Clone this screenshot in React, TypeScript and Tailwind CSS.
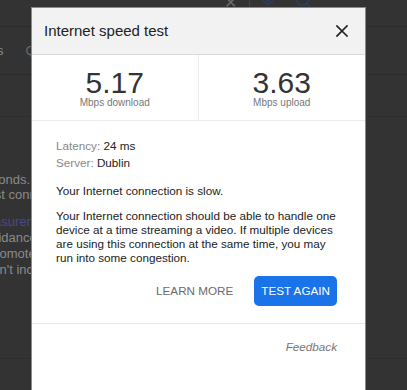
import { Mic, Search } from 'lucide-react';

function CloseIcon() {
    return (
        <svg width="12" height="12" viewBox="0 0 12 12" fill="none" stroke="#222" strokeWidth="1.7" strokeLinecap="square">
            <path d="M1 1L11 11M11 1L1 11" />
        </svg>
    );
}

function SpeedCell({ value, label, divider }: { value: string; label: string; divider?: boolean }) {
    return (
        <div className={`flex flex-col items-center pt-[13px] ${divider ? 'border-r border-[#ececec]' : ''}`}>
            <div className="text-[30px] leading-none text-[#333]">{value}</div>
            <div className="mt-[-1px] text-[10px] leading-[12px] text-[#777]">{label}</div>
        </div>
    );
}

export default function App() {
    return (
        <div className="relative h-[390px] w-[407px] overflow-hidden bg-[#333] font-['Liberation_Sans',Arial,sans-serif]">
            {/* dimmed page behind the dialog */}
            <div className="flex flex-col text-[13px] text-[#8a8a8a]">
                <div className="flex h-[27px] items-start border-b border-[#2b2b2b] pl-[224px]">
                    <span className="mt-[-9px] text-[16px] text-[#6a6a6a]">✕</span>
                    <div className="ml-[12px] h-[8px] w-px bg-[#444]" />
                    <Mic className="ml-[10px] mt-[-9px]" size={16} color="#2c3f66" />
                    <Search className="ml-[18px] mt-[-9px]" size={18} color="#2c3f66" />
                </div>
                <div className="flex h-[48px] items-center gap-[22px] border-b border-[#2b2b2b]">
                    <span className="ml-[-3px]">s</span>
                    <span className="text-[#6a6a6a]">Q</span>
                </div>
                <div className="h-[42px] border-b border-[#2e2e2e]" />
                <div className="mt-[55px] flex flex-col leading-[16px]">
                    <span className="ml-[-22px]">seconds.</span>
                    <span className="ml-[-16px] mt-[-1px]">test conn</span>
                    <span className="ml-[-24px] mt-[11px] text-[#4a4a86]">measurem</span>
                    <span className="ml-[-16px]">guidance</span>
                    <span className="ml-[-12px]">promote</span>
                    <span className="ml-[-15px]">don't incl</span>
                </div>
                <div className="mt-[80px] border-b border-[#2e2e2e]" />
            </div>

            {/* dialog */}
            <div className="absolute bottom-0 left-[31px] top-[7px] flex w-[335px] flex-col border border-b-0 border-[#8a8a8a] bg-white">
                <div className="flex h-[47px] items-center justify-between border-b border-[#dadada] bg-[#f2f2f2] pl-[12px] pr-[17px]">
                    <span className="text-[15px] text-[#222]">Internet speed test</span>
                    <CloseIcon />
                </div>

                <div className="grid h-[66px] grid-cols-2 border-b border-[#ececec]">
                    <SpeedCell value="5.17" label="Mbps download" divider />
                    <SpeedCell value="3.63" label="Mbps upload" />
                </div>

                <div className="flex flex-col px-[24px] pt-[16px] text-[11.7px] text-[#222]">
                    <div className="leading-[17px]">
                        <span className="text-[#888]">Latency: </span>24 ms
                    </div>
                    <div className="leading-[17px]">
                        <span className="text-[#888]">Server: </span>Dublin
                    </div>
                    <p className="mt-[13px] leading-[14px]">Your Internet connection is slow.</p>
                    <p className="mt-[11px] leading-[14px]">
                        Your Internet connection should be able to handle one device at a time streaming a video. If multiple devices are using this
                        connection at the same time, you may run into some congestion.
                    </p>
                    <div className="mt-[11px] flex items-center justify-end gap-[21px] pr-[4px]">
                        <button className="text-[11.7px] text-[#6b6b6b]">LEARN MORE</button>
                        <button className="h-[30px] rounded-[5px] bg-[#1a73e8] px-[7px] text-[11.7px] text-white">TEST AGAIN</button>
                    </div>
                </div>

                <div className="mt-[17px] border-t border-[#e8e8e8] px-[24px] pt-[16px]">
                    <div className="pr-[4px] text-right text-[11.7px] italic leading-[14px] text-[#777]">Feedback</div>
                </div>
            </div>
        </div>
    );
}
